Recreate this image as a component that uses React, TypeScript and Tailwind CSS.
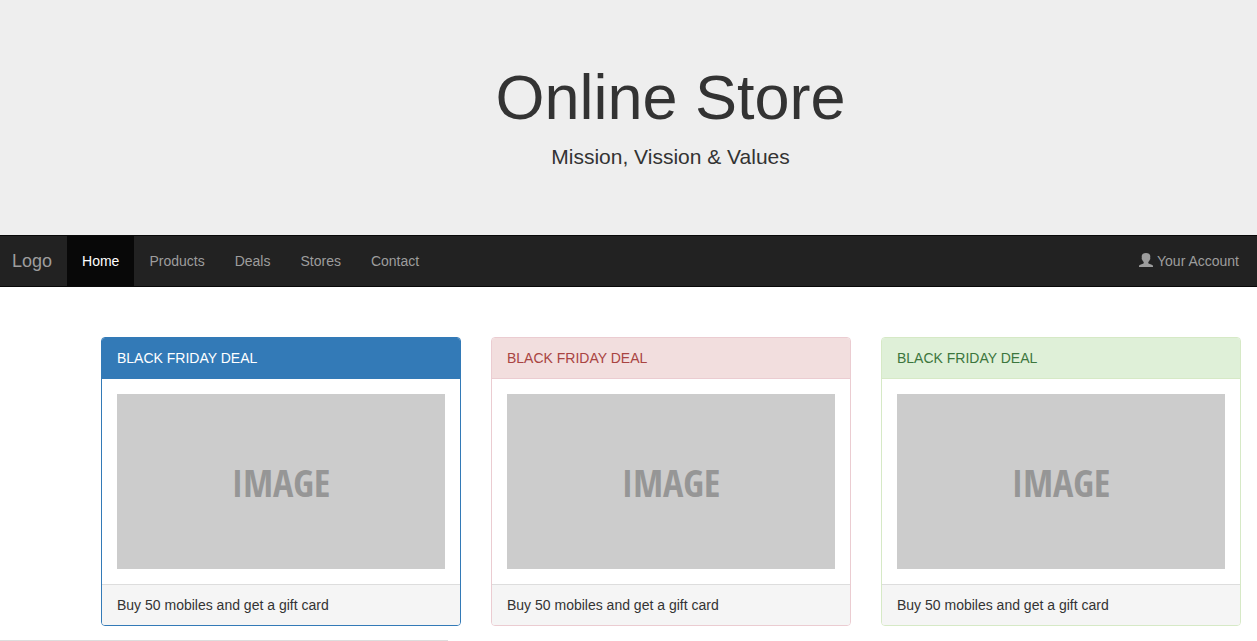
const links = ["Home", "Products", "Deals", "Stores", "Contact"];

const deals = [
  { id: 1, border: "border-[#337ab7]", head: "border-[#337ab7] bg-[#337ab7] text-white" },
  { id: 2, border: "border-[#ebccd1]", head: "border-[#ebccd1] bg-[#f2dede] text-[#a94442]" },
  { id: 3, border: "border-[#d6e9c6]", head: "border-[#d6e9c6] bg-[#dff0d8] text-[#3c763d]" },
];

function UserIcon() {
  return (
    <svg className="mb-0.5 h-[14px] w-[14px]" viewBox="0 0 14 14" fill="currentColor" aria-hidden="true">
      <path d="M7 0C4.300 0 2.700 1.200 2.700 3.400c0 .6.100 1.200.2 1.700-.4.200-.3 1.300.3 1.700.3.900.8 1.600 1.500 2.100v1c0 .4-.3.700-.8.900L1.200 11.800C.4 12.100 0 12.600 0 13.300V14h14v-.7c0-.7-.4-1.200-1.200-1.500l-2.700-1c-.5-.2-.8-.5-.8-.9v-1c.7-.5 1.200-1.200 1.500-2.100.6-.4.700-1.500.3-1.700.100-.5.200-1.100.2-1.700C11.300 1.200 9.700 0 7 0z" />
    </svg>
  );
}

export default function App() {
  return (
    <div className="min-h-screen bg-white font-['Liberation_Sans',Arial,sans-serif] text-sm leading-5 text-[#333]">
      <header className="bg-[#eee] py-[63px] pl-[84px] text-center">
        <h1 className="mb-[10px] text-[63px] leading-[69px]">Online Store</h1>
        <p className="text-[21px] leading-[30px]">Mission, Vission &amp; Values</p>
      </header>
      <nav className="flex items-center justify-between border-y border-[#080808] bg-[#222] pr-[18px] text-[#9d9d9d]">
        <div className="flex items-center">
          <a href="#" className="pr-[15px] pl-3 text-lg leading-5">Logo</a>
          <ul className="flex">
            {links.map((label) => (
              <li key={label}>
                <a
                  href="#"
                  className={label === "Home" ? "block bg-[#080808] p-[15px] text-white" : "block p-[15px]"}
                >
                  {label}
                </a>
              </li>
            ))}
          </ul>
        </div>
        <a href="#" className="flex items-center gap-1">
          <UserIcon />
          Your Account
        </a>
      </nav>
      <main className="grid grid-cols-3 gap-[30px] pt-[50px] pr-4 pb-[14px] pl-[101px]">
        {deals.map((deal) => (
          <section key={deal.id} className={`overflow-hidden rounded border ${deal.border}`}>
            <h2 className={`border-b px-[15px] py-[10px] ${deal.head}`}>BLACK FRIDAY DEAL</h2>
            <div className="p-[15px]">
              <div className="flex h-[175px] items-center justify-center bg-[#ccc] font-['Open_Sans_Condensed','Roboto_Condensed',sans-serif] text-[38px] leading-10 font-medium text-[#969696]">
                IMAGE
              </div>
            </div>
            <p className="border-t border-[#ddd] bg-[#f5f5f5] px-[15px] py-[10px]">
              Buy 50 mobiles and get a gift card
            </p>
          </section>
        ))}
      </main>
      <div className="h-px w-[448px] bg-[#ddd]" />
    </div>
  );
}
